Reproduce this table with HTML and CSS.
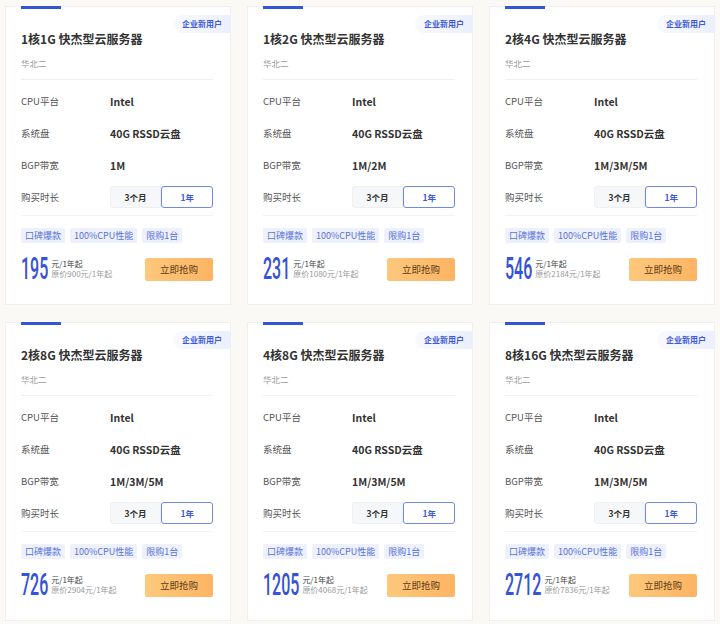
FILE: index.html
```html
<!DOCTYPE html>
<html lang="zh-CN">
<head>
  <meta charset="UTF-8" />
  <meta name="viewport" content="width=device-width, initial-scale=1.0"/>
  <title>快杰型云服务器</title>
  <link rel="stylesheet" href="styles.css">
</head>
<body>
  <div class="grid">

    <div class="card">
      <div class="bar"></div>
      <span class="badge">企业新用户</span>
      <h3 class="title">1核1G 快杰型云服务器</h3>
      <p class="region">华北二</p>
      <ul class="specs">
        <li><span class="label">CPU平台</span><span class="value">Intel</span></li>
        <li><span class="label">系统盘</span><span class="value">40G RSSD云盘</span></li>
        <li><span class="label">BGP带宽</span><span class="value">1M</span></li>
        <li><span class="label">购买时长</span>
          <div class="period"><span class="seg">3个月</span><span class="seg active">1年</span></div>
        </li>
      </ul>
      <div class="tags"><span>口碑爆款</span><span>100%CPU性能</span><span>限购1台</span></div>
      <div class="buy">
        <div class="price">
          <span class="num">195</span>
          <div class="unit"><span>元/1年起</span><span class="orig">原价900元/1年起</span></div>
        </div>
        <button>立即抢购</button>
      </div>
    </div>

    <div class="card">
      <div class="bar"></div>
      <span class="badge">企业新用户</span>
      <h3 class="title">1核2G 快杰型云服务器</h3>
      <p class="region">华北二</p>
      <ul class="specs">
        <li><span class="label">CPU平台</span><span class="value">Intel</span></li>
        <li><span class="label">系统盘</span><span class="value">40G RSSD云盘</span></li>
        <li><span class="label">BGP带宽</span><span class="value">1M/2M</span></li>
        <li><span class="label">购买时长</span>
          <div class="period"><span class="seg">3个月</span><span class="seg active">1年</span></div>
        </li>
      </ul>
      <div class="tags"><span>口碑爆款</span><span>100%CPU性能</span><span>限购1台</span></div>
      <div class="buy">
        <div class="price">
          <span class="num">231</span>
          <div class="unit"><span>元/1年起</span><span class="orig">原价1080元/1年起</span></div>
        </div>
        <button>立即抢购</button>
      </div>
    </div>

    <div class="card">
      <div class="bar"></div>
      <span class="badge">企业新用户</span>
      <h3 class="title">2核4G 快杰型云服务器</h3>
      <p class="region">华北二</p>
      <ul class="specs">
        <li><span class="label">CPU平台</span><span class="value">Intel</span></li>
        <li><span class="label">系统盘</span><span class="value">40G RSSD云盘</span></li>
        <li><span class="label">BGP带宽</span><span class="value">1M/3M/5M</span></li>
        <li><span class="label">购买时长</span>
          <div class="period"><span class="seg">3个月</span><span class="seg active">1年</span></div>
        </li>
      </ul>
      <div class="tags"><span>口碑爆款</span><span>100%CPU性能</span><span>限购1台</span></div>
      <div class="buy">
        <div class="price">
          <span class="num">546</span>
          <div class="unit"><span>元/1年起</span><span class="orig">原价2184元/1年起</span></div>
        </div>
        <button>立即抢购</button>
      </div>
    </div>

    <div class="card">
      <div class="bar"></div>
      <span class="badge">企业新用户</span>
      <h3 class="title">2核8G 快杰型云服务器</h3>
      <p class="region">华北二</p>
      <ul class="specs">
        <li><span class="label">CPU平台</span><span class="value">Intel</span></li>
        <li><span class="label">系统盘</span><span class="value">40G RSSD云盘</span></li>
        <li><span class="label">BGP带宽</span><span class="value">1M/3M/5M</span></li>
        <li><span class="label">购买时长</span>
          <div class="period"><span class="seg">3个月</span><span class="seg active">1年</span></div>
        </li>
      </ul>
      <div class="tags"><span>口碑爆款</span><span>100%CPU性能</span><span>限购1台</span></div>
      <div class="buy">
        <div class="price">
          <span class="num">726</span>
          <div class="unit"><span>元/1年起</span><span class="orig">原价2904元/1年起</span></div>
        </div>
        <button>立即抢购</button>
      </div>
    </div>

    <div class="card">
      <div class="bar"></div>
      <span class="badge">企业新用户</span>
      <h3 class="title">4核8G 快杰型云服务器</h3>
      <p class="region">华北二</p>
      <ul class="specs">
        <li><span class="label">CPU平台</span><span class="value">Intel</span></li>
        <li><span class="label">系统盘</span><span class="value">40G RSSD云盘</span></li>
        <li><span class="label">BGP带宽</span><span class="value">1M/3M/5M</span></li>
        <li><span class="label">购买时长</span>
          <div class="period"><span class="seg">3个月</span><span class="seg active">1年</span></div>
        </li>
      </ul>
      <div class="tags"><span>口碑爆款</span><span>100%CPU性能</span><span>限购1台</span></div>
      <div class="buy">
        <div class="price">
          <span class="num">1205</span>
          <div class="unit"><span>元/1年起</span><span class="orig">原价4068元/1年起</span></div>
        </div>
        <button>立即抢购</button>
      </div>
    </div>

    <div class="card">
      <div class="bar"></div>
      <span class="badge">企业新用户</span>
      <h3 class="title">8核16G 快杰型云服务器</h3>
      <p class="region">华北二</p>
      <ul class="specs">
        <li><span class="label">CPU平台</span><span class="value">Intel</span></li>
        <li><span class="label">系统盘</span><span class="value">40G RSSD云盘</span></li>
        <li><span class="label">BGP带宽</span><span class="value">1M/3M/5M</span></li>
        <li><span class="label">购买时长</span>
          <div class="period"><span class="seg">3个月</span><span class="seg active">1年</span></div>
        </li>
      </ul>
      <div class="tags"><span>口碑爆款</span><span>100%CPU性能</span><span>限购1台</span></div>
      <div class="buy">
        <div class="price">
          <span class="num">2712</span>
          <div class="unit"><span>元/1年起</span><span class="orig">原价7836元/1年起</span></div>
        </div>
        <button>立即抢购</button>
      </div>
    </div>

  </div>
</body>
</html>
```

FILE: styles.css
```css
/* General Reset */
* {
  margin: 0;
  padding: 0;
  box-sizing: border-box;
}

body {
  font-family: "Noto Sans CJK SC", sans-serif;
  background-color: #faf9f5;
  color: #333;
}

.grid {
  display: grid;
  grid-template-columns: repeat(3, 226px);
  gap: 17px 16px;
  padding: 6px 0 0 5px;
}

.card {
  position: relative;
  height: 299px;
  background-color: #fff;
  border: 1px solid #f0efeb;
  padding: 0 17px 0 15px;
}

.bar {
  width: 40px;
  height: 3px;
  margin-top: -1px;
  background-color: #3356d6;
}

.badge {
  position: absolute;
  top: 8px;
  right: -1px;
  width: 58px;
  height: 18px;
  line-height: 18px;
  text-align: center;
  font-size: 8px;
  font-weight: 700;
  color: #3d5ad8;
  border-radius: 9px 0 0 9px;
  background: linear-gradient(90deg, #f9fafe, #ebeffc);
}

.title {
  margin-top: 20px;
  font-size: 12px;
  line-height: 20px;
  font-weight: 700;
  color: #333;
}

.region {
  margin-top: 7px;
  font-size: 8.5px;
  line-height: 14px;
  color: #999;
  padding-bottom: 9px;
  border-bottom: 1px solid #f0f0f0;
}

.specs {
  list-style: none;
  padding: 5px 0 2px;
  border-bottom: 1px solid #f3f3f3;
}

.specs li {
  display: flex;
  align-items: center;
  height: 32px;
  font-size: 9.5px;
}

.label {
  width: 89px;
  color: #555;
}

.value {
  font-size: 10.5px;
  font-weight: 700;
  color: #333;
}

.period {
  display: flex;
  width: 104px;
  height: 22px;
}

.seg {
  flex: 1;
  display: flex;
  align-items: center;
  justify-content: center;
  font-size: 8.5px;
  font-weight: 700;
  color: #333;
  background-color: #f6f7f9;
  border: 1px solid #eef0f3;
  border-radius: 3px 0 0 3px;
}

.seg.active {
  color: #3d5ad8;
  background-color: #fff;
  border-color: #7089e3;
  border-radius: 3px;
}

.tags {
  display: flex;
  gap: 5px;
  margin-top: 12px;
}

.tags span {
  height: 15px;
  line-height: 15px;
  padding: 0 4px;
  font-size: 9px;
  color: #5671d8;
  background-color: #eef1fc;
  border-radius: 2px;
}

.buy {
  display: flex;
  justify-content: space-between;
  align-items: center;
  margin-top: 14px;
  height: 24px;
}

.price {
  display: flex;
  align-items: center;
}

.num {
  display: inline-block;
  font-family: Roboto, "Liberation Sans", sans-serif;
  font-size: 16px;
  line-height: 16px;
  font-weight: 500;
  color: #3553d6;
  transform: scaleY(2);
  margin-right: 3px;
}

.unit {
  display: flex;
  flex-direction: column;
  font-size: 8px;
  line-height: 10.5px;
  color: #444;
}

.unit .orig {
  color: #999;
}

button {
  width: 68px;
  height: 23px;
  border: none;
  border-radius: 2px;
  font-family: "Noto Sans CJK SC", sans-serif;
  font-size: 9.5px;
  color: #5b3a16;
  background: linear-gradient(90deg, #fdc87c, #fdb463);
  cursor: pointer;
}
```
